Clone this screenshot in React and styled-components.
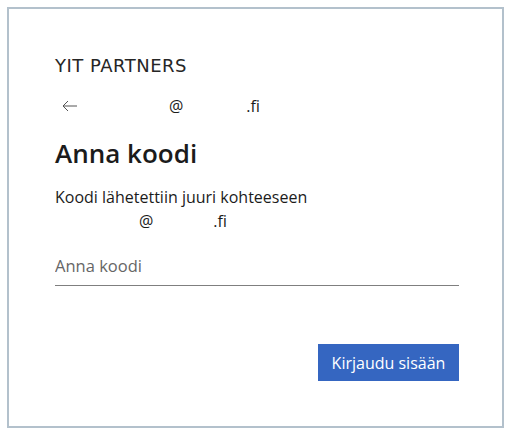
import React, { useState } from "react";
import styled, { createGlobalStyle } from "styled-components";

const GlobalStyle = createGlobalStyle`
    body {
        margin: 0;
        background: #ffffff;
        font-family: "Open Sans", "Noto Sans", sans-serif;
        color: #1b1b1b;
    }
`;

const Card = styled.div`
    box-sizing: border-box;
    width: 497px;
    height: 421px;
    margin: 7px;
    padding: 47px 43px 0 46px;
    border: 2px solid #b3c1cc;
    background: #ffffff;
    display: flex;
    flex-direction: column;
`;

const Brand = styled.div`
    font-family: "DejaVu Sans", Verdana, sans-serif;
    font-size: 18px;
    line-height: 20px;
    letter-spacing: 0.5px;
    color: #262626;
`;

const Identity = styled.div`
    display: flex;
    align-items: center;
    margin-top: 20px;
    height: 20px;
    font-size: 16px;
    line-height: 20px;
    color: #1b1b1b;
`;

const BackButton = styled.button`
    display: flex;
    align-items: center;
    padding: 0;
    margin: 0 0 0 7px;
    border: none;
    background: none;
    cursor: pointer;
    color: #555555;
`;

const Hidden = styled.span`
    display: inline-block;
    width: ${(p) => p.w}px;
`;

const Heading = styled.h1`
    margin: 21px 0 0;
    font-size: 26px;
    font-weight: 600;
    line-height: 32px;
    color: #1b1b1b;
`;

const Description = styled.div`
    margin-top: 16px;
    font-size: 16px;
    line-height: 24px;
    color: #1b1b1b;
`;

const CodeInput = styled.input`
    box-sizing: border-box;
    width: 100%;
    margin-top: 17px;
    padding: 6px 0 9px;
    border: none;
    border-bottom: 1px solid #7f7f7f;
    outline: none;
    font-family: inherit;
    font-size: 16.5px;
    line-height: 20px;
    color: #1b1b1b;
    background: transparent;

    &::placeholder {
        color: #666666;
    }
`;

const Actions = styled.div`
    display: flex;
    justify-content: flex-end;
    margin-top: 58px;
`;

const SubmitButton = styled.button`
    width: 141px;
    height: 37px;
    padding: 0;
    border: none;
    background: #3566c1;
    color: #ffffff;
    font-family: inherit;
    font-size: 16px;
    line-height: 20px;
    cursor: pointer;
`;

function BackArrow() {
    return (
        <svg width="15" height="12" viewBox="0 0 15 12" fill="none">
            <path d="M15 6H1.2M6 1L1 6l5 5" stroke="currentColor" strokeWidth="1" />
        </svg>
    );
}

function Email({ lead, user, domain }) {
    return (
        <span>
            <Hidden w={lead} />@<Hidden w={user} />
            <Hidden w={domain} />.fi
        </span>
    );
}

function App() {
    const [code, setCode] = useState("");

    return (
        <>
            <GlobalStyle />
            <Card>
                <Brand>YIT PARTNERS</Brand>
                <Identity>
                    <BackButton aria-label="Takaisin">
                        <BackArrow />
                    </BackButton>
                    <Email lead={92} user={30} domain={33} />
                </Identity>
                <Heading>Anna koodi</Heading>
                <Description>
                    <div>Koodi lähetettiin juuri kohteeseen</div>
                    <Email lead={84} user={30} domain={30} />
                </Description>
                <CodeInput
                    placeholder="Anna koodi"
                    value={code}
                    onChange={(e) => setCode(e.target.value)}
                />
                <Actions>
                    <SubmitButton>Kirjaudu sisään</SubmitButton>
                </Actions>
            </Card>
        </>
    );
}

export default App;
